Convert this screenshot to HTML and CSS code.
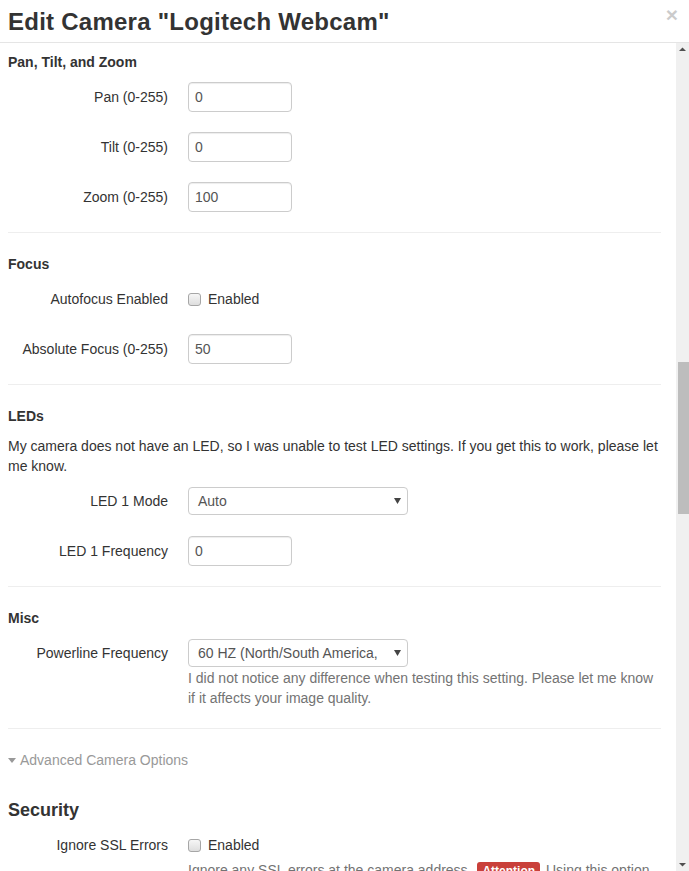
FILE: index.html
```html
<!DOCTYPE html>
<html>
<head>
<meta charset="utf-8">
<link rel="stylesheet" href="styles.css">
</head>
<body>
<div class="modal">
  <div class="modal-header">
    <h1 class="title">Edit Camera "Logitech Webcam"</h1>
    <span class="close">×</span>
  </div>
  <div class="modal-main">
    <div class="modal-body">
      <div class="section">
        <h4 class="sec-title">Pan, Tilt, and Zoom</h4>
        <div class="row"><label class="lbl">Pan (0-255)</label><div class="ctl"><div class="input">0</div></div></div>
        <div class="row"><label class="lbl">Tilt (0-255)</label><div class="ctl"><div class="input">0</div></div></div>
        <div class="row"><label class="lbl">Zoom (0-255)</label><div class="ctl"><div class="input">100</div></div></div>
      </div>
      <hr class="sep">
      <div class="section">
        <h4 class="sec-title">Focus</h4>
        <div class="row"><label class="lbl">Autofocus Enabled</label><div class="ctl"><span class="check"><span class="box"></span>Enabled</span></div></div>
        <div class="row"><label class="lbl">Absolute Focus (0-255)</label><div class="ctl"><div class="input">50</div></div></div>
      </div>
      <hr class="sep">
      <div class="section">
        <h4 class="sec-title">LEDs</h4>
        <p class="para">My camera does not have an LED, so I was unable to test LED settings. If you get this to work, please let me know.</p>
        <div class="row"><label class="lbl">LED 1 Mode</label><div class="ctl"><div class="select wide"><span>Auto</span><svg class="arrow" width="7" height="6" viewBox="0 0 7 6"><path d="M0 0H7L3.5 6Z" fill="#444"/></svg></div></div></div>
        <div class="row"><label class="lbl">LED 1 Frequency</label><div class="ctl"><div class="input">0</div></div></div>
      </div>
      <hr class="sep">
      <div class="section">
        <h4 class="sec-title">Misc</h4>
        <div class="row top"><label class="lbl">Powerline Frequency</label><div class="ctl"><div class="select wide"><span>60 HZ (North/South America,</span><svg class="arrow" width="7" height="6" viewBox="0 0 7 6"><path d="M0 0H7L3.5 6Z" fill="#444"/></svg></div><p class="help">I did not notice any difference when testing this setting. Please let me know if it affects your image quality.</p></div></div>
      </div>
      <hr class="sep">
      <div class="advanced"><svg class="caret" width="8" height="5" viewBox="0 0 8 5"><path d="M0 0H8L4 5Z" fill="#999"/></svg>Advanced Camera Options</div>
      <h3 class="big-title">Security</h3>
      <div class="row top"><label class="lbl">Ignore SSL Errors</label><div class="ctl"><span class="check"><span class="box"></span>Enabled</span><p class="help">Ignore any SSL errors at the camera address. <span class="badge">Attention</span> Using this option reduces security, so only enable it if you trust the network connection to the camera.</p></div></div>
    </div>
    <div class="scrollbar">
      <svg class="sb-arrow" width="13" height="13" viewBox="0 0 13 13"><path d="M3 8H10L6.5 4.5Z" fill="#505050"/></svg>
      <div class="sb-track"><div class="sb-thumb"></div></div>
      <svg class="sb-arrow" width="13" height="13" viewBox="0 0 13 13"><path d="M3 5H10L6.5 8.5Z" fill="#505050"/></svg>
    </div>
  </div>
</div>
</body>
</html>
```

FILE: styles.css
```css
* { box-sizing: border-box; }
html, body { margin: 0; padding: 0; }
body {
  width: 689px;
  height: 871px;
  overflow: hidden;
  background: #fff;
  font-family: "Liberation Sans", Arial, sans-serif;
  font-size: 14px;
  line-height: 20px;
  color: #333;
}
.modal { display: flex; flex-direction: column; height: 871px; }
.modal-header {
  height: 43px;
  flex: none;
  display: flex;
  align-items: center;
  justify-content: space-between;
  padding: 0 8px 0 8px;
  border-bottom: 1px solid #e5e5e5;
}
.title {
  margin: 0;
  font-size: 24px;
  line-height: 30px;
  font-weight: bold;
  letter-spacing: 0.25px;
  color: #333;
  padding-top: 1px;
}
.close {
  font-size: 21px;
  font-weight: bold;
  color: #000;
  opacity: 0.2;
  line-height: 1;
  margin-right: 3px;
  margin-top: -14px;
}
.modal-main { flex: 1; display: flex; min-height: 0; }
.modal-body {
  flex: 1;
  overflow: hidden;
  padding: 9px 15px 0 8px;
}
.sec-title {
  margin: 0 0 10px 0;
  font-size: 14px;
  line-height: 20px;
  font-weight: bold;
}
.row {
  display: grid;
  grid-template-columns: 160px 1fr;
  column-gap: 20px;
  align-items: center;
  min-height: 30px;
  margin-bottom: 20px;
}
.row.top { align-items: start; }
.row.top .lbl { line-height: 30px; }
.lbl { text-align: right; white-space: nowrap; }
.ctl { min-width: 0; }
.input {
  width: 104px;
  height: 30px;
  border: 1px solid #ccc;
  border-radius: 4px;
  padding: 0 6px;
  line-height: 28px;
  color: #555;
  box-shadow: inset 0 1px 1px rgba(0,0,0,.075);
}
.select {
  width: 220px;
  height: 28px;
  margin: 1px 0;
  border: 1px solid #ccc;
  border-radius: 4px;
  padding: 0 0 0 9px;
  line-height: 26px;
  color: #555;
  display: flex;
  align-items: center;
  justify-content: space-between;
  white-space: nowrap;
  overflow: hidden;
}
.select .arrow { margin-right: 6px; flex: none; }
.check { display: inline-flex; align-items: center; line-height: 30px; }
.box {
  width: 13px;
  height: 13px;
  border: 1px solid #a6a6a6;
  border-radius: 3px;
  background: linear-gradient(#f6f6f6, #dedede);
  margin-right: 7px;
}
.help { margin: 0; color: #737373; line-height: 20px; }
.help .badge {
  display: inline-block;
  background: #c9403a;
  color: #fff;
  font-weight: bold;
  font-size: 12px;
  line-height: 12px;
  padding: 3px 5px 2px;
  margin: 0 2px;
  border-radius: 3px;
}
.para { margin: 0 0 10px 0; }
.sep { border: 0; border-top: 1px solid #eee; margin: 0 0 21px 0; }
.advanced {
  color: #999;
  display: flex;
  align-items: center;
  line-height: 20px;
}
.caret { margin-right: 4px; margin-top: 1px; }
.big-title {
  margin: 30px 0 10px 0;
  font-size: 18px;
  line-height: 20px;
  font-weight: bold;
}
.scrollbar {
  width: 13px;
  flex: none;
  background: #f0f0f0;
  display: flex;
  flex-direction: column;
}
.sb-arrow { flex: none; display: block; }
.sb-track { flex: 1; padding: 306px 0 0 2px; }
.sb-thumb { width: 11px; height: 152px; background: #bdbdbd; }
```
